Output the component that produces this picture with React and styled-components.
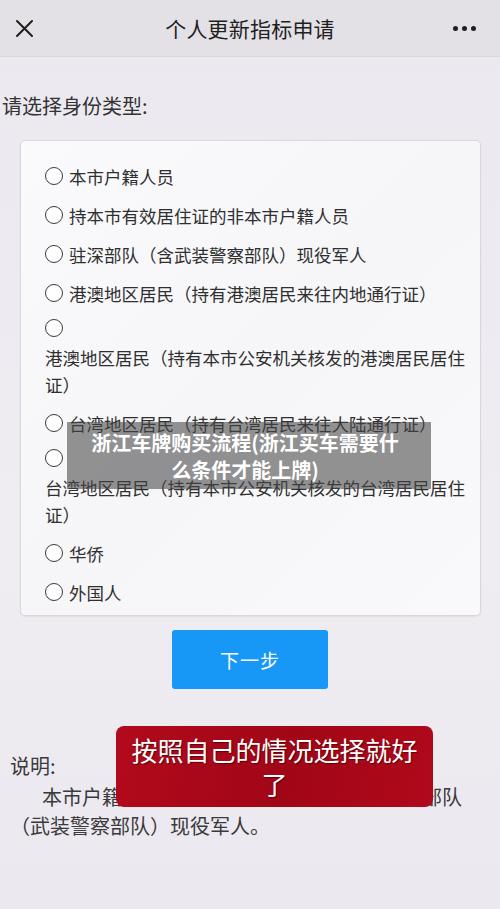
import React from "react";
import styled, { createGlobalStyle } from "styled-components";

const GlobalStyle = createGlobalStyle`
  html, body {
    margin: 0;
    padding: 0;
    background: #ebe7ef;
  }
  body {
    font-family: "Noto Sans CJK SC", "Noto Sans", sans-serif;
    color: #2e2e2e;
  }
`;

const Page = styled.div`
  position: relative;
  width: 500px;
  height: 909px;
  overflow: hidden;
  background: linear-gradient(180deg, #ece8f0 0%, #efecf2 60%, #ebe8ef 100%);
`;

const Header = styled.header`
  height: 56px;
  display: grid;
  grid-template-columns: 56px 1fr 56px;
  align-items: center;
  background: #e3e0e6;
  border-bottom: 1px solid #dcd8df;
`;

const HeaderTitle = styled.h1`
  margin: 0;
  text-align: center;
  font-size: 21px;
  font-weight: 400;
  color: #1f1f1f;
  letter-spacing: 0.2px;
`;

const IconButton = styled.div`
  display: flex;
  align-items: center;
  justify-content: ${({ $end }) => ($end ? "flex-end" : "flex-start")};
  padding: ${({ $end }) => ($end ? "0 24px 0 0" : "0 0 0 15px")};
`;

const Dot = styled.span`
  width: 5px;
  height: 5px;
  border-radius: 50%;
  background: #1f1f1f;
  margin-left: 4px;
`;

const Prompt = styled.div`
  margin-top: 35px;
  padding-left: 2px;
  font-size: 20px;
  line-height: 28px;
  color: #333;
`;

const Card = styled.div`
  margin: 20px 19px 0 20px;
  padding: 22px 12px 9px 24px;
  background: linear-gradient(135deg, #fafafc 0%, #f6f6f9 50%, #f9f9fb 100%);
  border: 1px solid #d9d6dd;
  border-radius: 5px;
  box-shadow: 0 1px 2px rgba(0, 0, 0, 0.06);
`;

const Option = styled.div`
  font-size: 17.5px;
  line-height: 27px;
  color: #2f2f2f;
  & + & {
    margin-top: 12px;
  }
`;

const Radio = styled.span`
  display: ${({ $block }) => ($block ? "block" : "inline-block")};
  width: 18px;
  height: 18px;
  box-sizing: border-box;
  border: 1.6px solid #3a3a3a;
  border-radius: 50%;
  vertical-align: -1px;
  margin-right: 6px;
  margin-top: ${({ $block }) => ($block ? "2px" : "0")};
  margin-bottom: ${({ $block }) => ($block ? "7px" : "0")};
  background: #fff;
`;

const NextButton = styled.button`
  display: block;
  margin: 14px auto 0;
  width: 156px;
  height: 59px;
  border: none;
  border-radius: 3px;
  background: #1898f6;
  color: #fff;
  font-family: inherit;
  font-size: 19px;
  letter-spacing: 1px;
`;

const NoteTitle = styled.div`
  margin-top: 62px;
  padding-left: 10px;
  font-size: 20px;
  line-height: 29px;
  color: #3a3a3a;
`;

const NoteText = styled.p`
  margin: 2px 0 0;
  padding: 0 25px 0 10px;
  text-indent: 32px;
  font-size: 20px;
  line-height: 29px;
  color: #3a3a3a;
`;

const Caption = styled.div`
  position: absolute;
  left: ${({ $left }) => $left}px;
  top: ${({ $top }) => $top}px;
  width: ${({ $width }) => $width}px;
  height: ${({ $height }) => $height}px;
  box-sizing: border-box;
  display: flex;
  align-items: center;
  justify-content: center;
  text-align: center;
  color: #fff;
`;

const GrayCaption = styled(Caption)`
  background: rgba(70, 70, 70, 0.58);
  font-size: 20px;
  font-weight: 700;
  line-height: 27px;
  padding-right: 8px;
`;

const RedCaption = styled(Caption)`
  background: linear-gradient(100deg, #b10a1c 0%, #a10617 55%, #b0091b 100%);
  border-radius: 8px;
  font-size: 26px;
  line-height: 34px;
  text-shadow: 1px 1px 1px rgba(60, 0, 0, 0.7);
`;

const options = [
  { text: "本市户籍人员" },
  { text: "持本市有效居住证的非本市户籍人员" },
  { text: "驻深部队（含武装警察部队）现役军人" },
  { text: "港澳地区居民（持有港澳居民来往内地通行证）" },
  { text: "港澳地区居民（持有本市公安机关核发的港澳居民居住证）", stacked: true },
  { text: "台湾地区居民（持有台湾居民来往大陆通行证）" },
  { text: "台湾地区居民（持有本市公安机关核发的台湾居民居住证）", stacked: true },
  { text: "华侨" },
  { text: "外国人" },
];

function CloseIcon() {
  return (
    <svg width="19" height="19" viewBox="0 0 19 19">
      <path d="M2 2 L17 17 M17 2 L2 17" stroke="#1f1f1f" strokeWidth="2" strokeLinecap="round" />
    </svg>
  );
}

export default function App() {
  return (
    <Page>
      <GlobalStyle />
      <Header>
        <IconButton>
          <CloseIcon />
        </IconButton>
        <HeaderTitle>个人更新指标申请</HeaderTitle>
        <IconButton $end>
          <Dot />
          <Dot />
          <Dot />
        </IconButton>
      </Header>

      <Prompt>请选择身份类型:</Prompt>

      <Card>
        {options.map((o) => (
          <Option key={o.text}>
            <Radio $block={o.stacked} />
            {o.text}
          </Option>
        ))}
      </Card>

      <NextButton>下一步</NextButton>

      <NoteTitle>说明:</NoteTitle>
      <NoteText>
        本市户籍人员指具有本市户籍的人员及驻深部队（武装警察部队）现役军人。
      </NoteText>

      <GrayCaption $left={67} $top={422} $width={364} $height={67}>
        浙江车牌购买流程(浙江买车需要什
        <br />
        么条件才能上牌)
      </GrayCaption>

      <RedCaption $left={116} $top={726} $width={317} $height={81}>
        按照自己的情况选择就好
        <br />了
      </RedCaption>
    </Page>
  );
}
